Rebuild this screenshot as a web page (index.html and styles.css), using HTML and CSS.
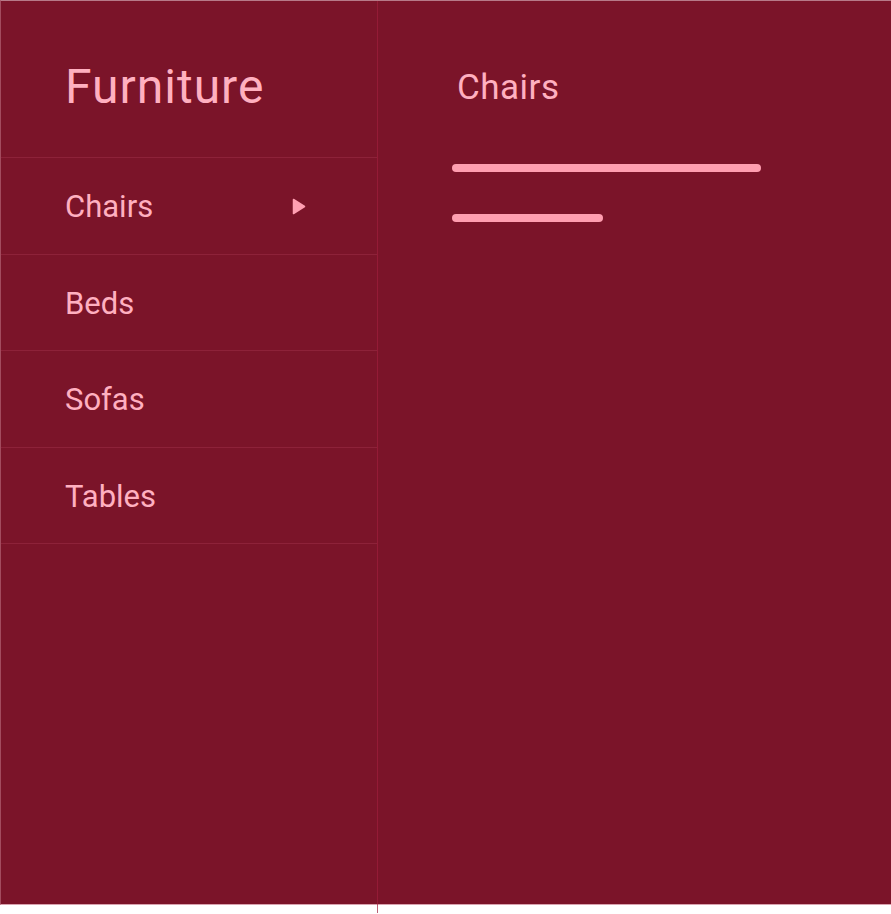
FILE: index.html
```html
<!DOCTYPE html>
<html lang="en">
  <head>
    <meta charset="UTF-8" />
    <meta name="viewport" content="width=device-width, initial-scale=1.0" />
    <link rel="stylesheet" href="styles.css">
  </head>
  <body>
    <div class="app">
      <nav class="sidebar">
        <h1 class="brand">Furniture</h1>
        <ul class="menu">
          <li class="menu-item active">
            <span>Chairs</span>
            <svg class="caret" width="14" height="17" viewBox="0 0 14 17">
              <path d="M1.5 1.5 L12.5 8.5 L1.5 15.5 Z" fill="currentColor" stroke="currentColor" stroke-width="1.5" stroke-linejoin="round" />
            </svg>
          </li>
          <li class="menu-item"><span>Beds</span></li>
          <li class="menu-item"><span>Sofas</span></li>
          <li class="menu-item"><span>Tables</span></li>
        </ul>
      </nav>
      <main class="detail">
        <h2 class="detail-title">Chairs</h2>
        <div class="line long"></div>
        <div class="line short"></div>
      </main>
    </div>
  </body>
</html>
```

FILE: styles.css
```css
* {
  box-sizing: border-box;
}
body {
  margin: 0;
  min-height: 914px;
  background: #fff;
  font-family: Roboto, "Noto Sans", sans-serif;
}
.app {
  display: flex;
  align-items: flex-start;
  width: 891px;
  height: 905px;
  background: #7b1429;
  border-top: 1px solid #b77a88;
  border-left: 1px solid #a34b5e;
  border-bottom: 1px solid #d9a3af;
}
/* the rule on the right runs a little past the panel's bottom edge */
.sidebar {
  width: 377px;
  height: 912px;
  flex-shrink: 0;
  border-right: 1px solid rgba(160, 30, 60, 0.7);
}
.brand {
  margin: 0;
  height: 157px;
  padding: 62px 0 0 64px;
  font-size: 48px;
  font-weight: 400;
  color: #ffb0c0;
  line-height: 1;
  letter-spacing: 1px;
  border-bottom: 1px solid #8d2239;
}
.menu {
  list-style: none;
  margin: 0;
  padding: 0;
}
.menu-item {
  display: flex;
  align-items: center;
  justify-content: space-between;
  height: 96.5px;
  padding: 2px 71px 0 64px;
  font-size: 31px;
  color: #ffb0c0;
  border-bottom: 1px solid #8d2239;
}
.caret {
  color: #ff9fb2;
}
.detail {
  flex: 1;
  padding: 69px 0 0 74px;
}
.detail-title {
  margin: 0 0 0 5px;
  font-size: 35px;
  font-weight: 400;
  color: #ffb0c0;
  line-height: 36px;
  letter-spacing: 0.5px;
}
.line {
  height: 8px;
  border-radius: 4px;
  background: #ff9eb0;
}
.line.long {
  width: 309px;
  margin-top: 58px;
}
.line.short {
  width: 151px;
  margin-top: 42px;
}
```
